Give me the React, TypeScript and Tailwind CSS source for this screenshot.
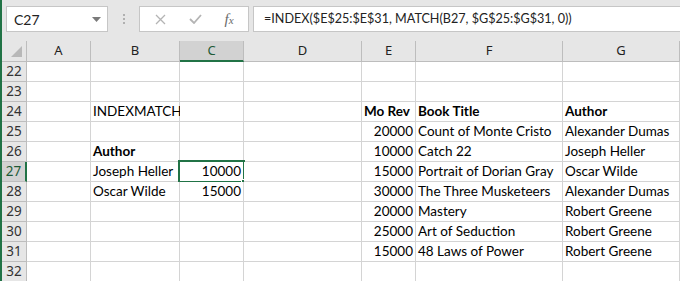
import React from "react";

const cols = [
  { key: "A", w: "w-[64px]" },
  { key: "B", w: "w-[89px]" },
  { key: "C", w: "w-[64px]" },
  { key: "D", w: "w-[118px]" },
  { key: "E", w: "w-[54px]" },
  { key: "F", w: "w-[147px]" },
  { key: "G", w: "w-[117px]" },
];

type Cell = { text: string; bold?: boolean; right?: boolean };
type Row = { n: number; cells: Partial<Record<string, Cell>> };

const rows: Row[] = [
  { n: 22, cells: {} },
  { n: 23, cells: {} },
  {
    n: 24,
    cells: {
      B: { text: "INDEXMATCH" },
      E: { text: "Mo Rev", bold: true },
      F: { text: "Book Title", bold: true },
      G: { text: "Author", bold: true },
    },
  },
  {
    n: 25,
    cells: {
      E: { text: "20000", right: true },
      F: { text: "Count of Monte Cristo" },
      G: { text: "Alexander Dumas" },
    },
  },
  {
    n: 26,
    cells: {
      B: { text: "Author", bold: true },
      E: { text: "10000", right: true },
      F: { text: "Catch 22" },
      G: { text: "Joseph Heller" },
    },
  },
  {
    n: 27,
    cells: {
      B: { text: "Joseph Heller" },
      C: { text: "10000", right: true },
      E: { text: "15000", right: true },
      F: { text: "Portrait of Dorian Gray" },
      G: { text: "Oscar Wilde" },
    },
  },
  {
    n: 28,
    cells: {
      B: { text: "Oscar Wilde" },
      C: { text: "15000", right: true },
      E: { text: "30000", right: true },
      F: { text: "The Three Musketeers" },
      G: { text: "Alexander Dumas" },
    },
  },
  {
    n: 29,
    cells: {
      E: { text: "20000", right: true },
      F: { text: "Mastery" },
      G: { text: "Robert Greene" },
    },
  },
  {
    n: 30,
    cells: {
      E: { text: "25000", right: true },
      F: { text: "Art of Seduction" },
      G: { text: "Robert Greene" },
    },
  },
  {
    n: 31,
    cells: {
      E: { text: "15000", right: true },
      F: { text: "48 Laws of Power" },
      G: { text: "Robert Greene" },
    },
  },
  { n: 32, cells: {} },
];

const cellFont = { fontFamily: "Lato, 'Open Sans', sans-serif" };
const uiFont = { fontFamily: "'Noto Sans', 'Open Sans', sans-serif" };

function FormulaBar() {
  return (
    <div className="flex h-[41px] items-start pt-[6px] pl-[4px]">
      <div className="flex h-[26px] w-[102px] items-center justify-between border border-[#c6c6c6] bg-white pl-[7px] pr-[6px]">
        <span className="text-[14px] text-[#222]" style={cellFont}>
          C27
        </span>
        <svg width="9" height="5" viewBox="0 0 9 5">
          <path d="M0 0h9L4.5 5z" fill="#7a7a7a" />
        </svg>
      </div>
      <div className="flex h-[26px] w-[31px] flex-col items-center justify-center gap-[2px]">
        <span className="h-[2px] w-[2px] bg-[#b0b0b0]" />
        <span className="h-[2px] w-[2px] bg-[#b0b0b0]" />
        <span className="h-[2px] w-[2px] bg-[#b0b0b0]" />
      </div>
      <div className="flex h-[26px] w-[110px] items-center border border-[#c6c6c6] bg-white">
        <div className="flex w-[38px] justify-center pl-[3px]">
          <svg width="11" height="11" viewBox="0 0 11 11">
            <path d="M1 1l9 9M10 1l-9 9" stroke="#b4b4b4" strokeWidth="1.3" />
          </svg>
        </div>
        <div className="flex w-[34px] justify-center">
          <svg width="13" height="10" viewBox="0 0 13 10">
            <path d="M1 5l4 4 7-8" stroke="#b4b4b4" strokeWidth="1.8" fill="none" />
          </svg>
        </div>
        <div className="flex w-[34px] justify-center">
          <span
            className="text-[15px] italic text-[#6a6a6a]"
            style={{ fontFamily: "'Liberation Serif', serif" }}
          >
            f<span className="text-[11px]">x</span>
          </span>
        </div>
      </div>
      <div className="ml-[4px] flex h-[26px] flex-1 items-center border border-r-0 border-[#c6c6c6] bg-white pl-[10px]">
        <span className="whitespace-nowrap text-[12.6px] text-[#222]" style={cellFont}>
          =INDEX($E$25:$E$31, MATCH(B27, $G$25:$G$31, 0))
        </span>
      </div>
    </div>
  );
}

function HeaderRow() {
  return (
    <div className="flex h-[21px]">
      <div className="relative w-[25px] border-r border-b border-[#bdbdbd]">
        <svg className="absolute right-[4px] bottom-[4px]" width="11" height="11" viewBox="0 0 11 11">
          <path d="M11 0v11H0z" fill="#b8b8b8" />
        </svg>
      </div>
      {cols.map((c) => (
        <div
          key={c.key}
          className={`${c.w} flex items-center justify-center border-r text-[13px] ${
            c.key === "C"
              ? "border-b-2 border-r-[#bdbdbd] border-b-[#217346] bg-[#d2d2d2] text-[#1e5a36]"
              : "border-b border-[#bdbdbd] text-[#222]"
          }`}
          style={uiFont}
        >
          {c.key}
        </div>
      ))}
    </div>
  );
}

function GridRow({ row }: { row: Row }) {
  const active = row.n === 27;
  return (
    <div className="flex h-[20px]">
      <div
        className={`flex w-[25px] items-center justify-center border-b text-[13.5px] ${
          active
            ? "border-r-2 border-b-[#bdbdbd] border-r-[#217346] bg-[#d2d2d2] text-[#1e5a36]"
            : "border-r border-[#bdbdbd] text-[#333]"
        }`}
        style={uiFont}
      >
        {row.n}
      </div>
      {cols.map((c) => {
        const cell = row.cells[c.key];
        const selected = active && c.key === "C";
        return (
          <div
            key={c.key}
            className={`${c.w} relative flex items-center border-r border-b border-[#d4d4d4] bg-white px-[2px] text-[13.5px] leading-none text-black ${
              cell?.right ? "justify-end" : "justify-start"
            }`}
            style={cellFont}
          >
            {cell ? (
              <span className={`whitespace-nowrap ${cell.bold ? "font-bold" : ""}`}>
                {cell.text}
              </span>
            ) : null}
            {selected ? (
              <>
                <span className="pointer-events-none absolute -top-[2px] -left-[2px] h-[23px] w-[67px] border-2 border-[#217346]" />
                <span className="absolute -right-[3px] -bottom-[3px] h-[5px] w-[5px] border border-white bg-[#217346]" />
              </>
            ) : null}
          </div>
        );
      })}
    </div>
  );
}

export default function App() {
  return (
    <div className="h-[281px] w-[680px] overflow-hidden border-l-2 border-[#217346] bg-[#e6e6e6]">
      <FormulaBar />
      <HeaderRow />
      {rows.map((r) => (
        <GridRow key={r.n} row={r} />
      ))}
    </div>
  );
}
